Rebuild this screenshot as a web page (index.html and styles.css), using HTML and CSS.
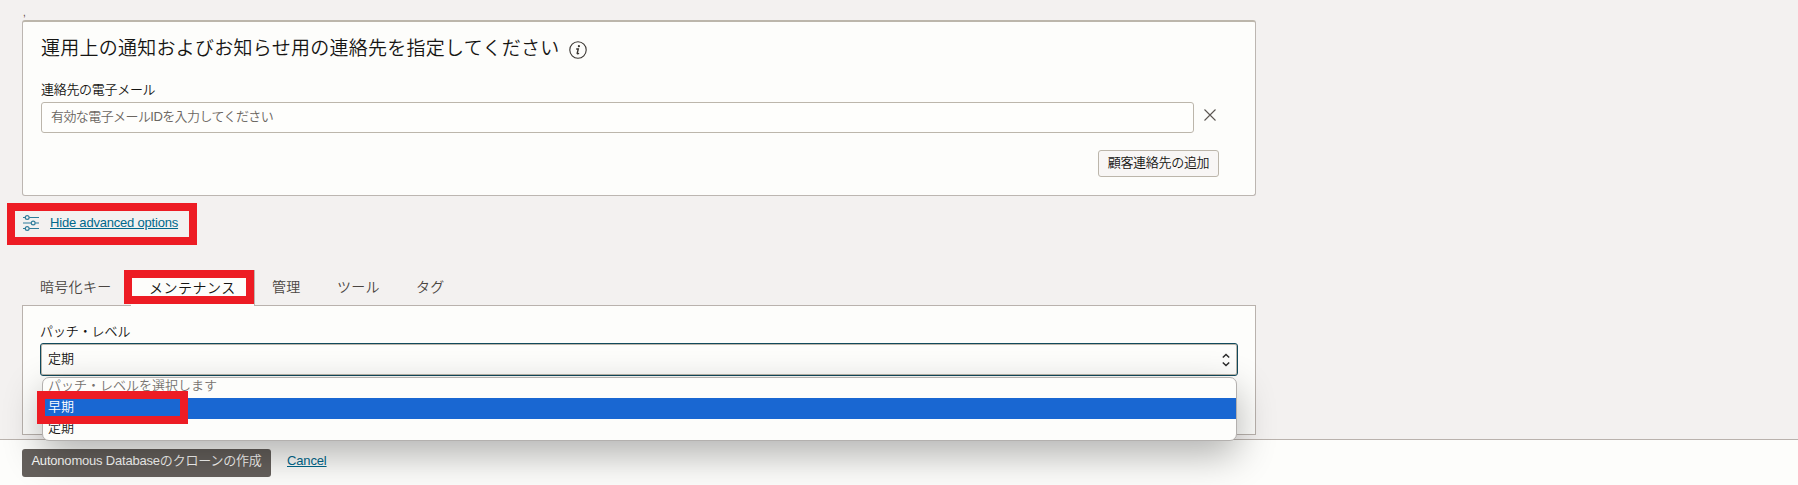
FILE: index.html
```html
<!DOCTYPE html>
<html lang="ja">
<head>
<meta charset="utf-8">
<title>Autonomous Databaseのクローンの作成</title>
<link rel="stylesheet" href="styles.css">
</head>
<body>
<main class="content">
  <div class="lead">,</div>
  <section class="card">
    <h2 class="card-title"><span class="title-text">運用上の通知およびお知らせ用の連絡先を指定してください</span>
      <svg class="info" width="18" height="18" viewBox="0 0 18 18"><circle cx="9" cy="9" r="8.2" fill="none" stroke="#3a3632" stroke-width="1.1"/><circle cx="9.9" cy="5.2" r="1.1" fill="#3a3632"/><path d="M7.200 8h2.100l-1.100 4.200q-.2 1 1.900.1" fill="none" stroke="#3a3632" stroke-width="1.4"/></svg>
    </h2>
    <label class="label contact-label">連絡先の電子メール</label>
    <div class="row">
      <div class="input"><span class="placeholder">有効な電子メールIDを入力してください</span></div>
      <svg class="close" width="12" height="12" viewBox="0 0 12 12"><path d="M.5.5l11 11M11.5.5l-11 11" fill="none" stroke="#5b5652" stroke-width="1.1"/></svg>
    </div>
    <div class="actions"><button class="add">顧客連絡先の追加</button></div>
  </section>

  <div class="advanced">
    <svg class="sliders" width="17" height="17" viewBox="0 0 17 17" fill="none" stroke="#2f7d9b" stroke-width="1.2"><path d="M1 2.500h2.200M7.200 2.500H17M1 8h8.200M13.200 8H17M1 13.500h2.200M7.200 13.500H17"/><circle cx="5.200" cy="2.500" r="1.900"/><circle cx="11.200" cy="8" r="1.900"/><circle cx="5.200" cy="13.500" r="1.900"/></svg>
    <a class="link advanced-link">Hide advanced options</a>
    <span class="mark mark-advanced"></span>
  </div>

  <nav class="tabs">
    <span class="tab tab-key">暗号化キー</span>
    <span class="tab tab-active"><span class="tab-text">メンテナンス</span><span class="mark mark-tab"></span></span>
    <span class="tab tab-admin">管理</span>
    <span class="tab tab-tool">ツール</span>
    <span class="tab tab-tag">タグ</span>
  </nav>
  <section class="panel">
    <label class="label patch-label">パッチ・レベル</label>
    <div class="select">
      <span class="value">定期</span>
      <svg class="arrows" width="8" height="14" viewBox="0 0 8 14"><path d="M.8 4.500L4 1.500l3.200 3M.8 9.500l3.200 3 3.200-3" fill="none" stroke="#2b2b2b" stroke-width="1.500"/></svg>
      <div class="menu">
        <div class="option hint"><span class="hint-text">パッチ・レベルを選択します</span></div>
        <div class="option chosen"><span>早期</span></div>
        <div class="option"><span>定期</span></div>
        <span class="mark mark-option"></span>
      </div>
    </div>
  </section>
</main>
<footer class="footer">
  <button class="create">Autonomous Databaseのクローンの作成</button>
  <a class="link cancel">Cancel</a>
</footer>
</body>
</html>
```
FILE: styles.css
```css
* { box-sizing: border-box; }
body {
  margin: 0; height: 485px; overflow: hidden; display: flex; flex-direction: column;
  background: #f3f1f0; color: #161513;
  font: 350 13px/16px "Liberation Sans", "Noto Sans CJK JP", sans-serif;
}
span, label, a, button { white-space: nowrap; }
.content { height: 439px; width: 1256px; padding-left: 22px; flex: none; position: relative; z-index: 2; }
.lead { height: 20px; padding: 5px 0 0 1px; font-size: 10px; line-height: 16px; color: #57483a; }
.card {
  height: 176px; padding: 15px 18px 0; background: #fdfdfb;
  border: 1px solid #bcb6b1; border-top: 2px solid #bcb6ab; border-radius: 3px;
}
.card-title { display: flex; align-items: center; gap: 9px; margin: 0; height: 24px; font-size: 19px; font-weight: 350; color: #161513; }
.title-text { letter-spacing: .26px; }
.info { margin-top: 2px; }
.label { display: block; letter-spacing: -.3px; }
.contact-label { margin-top: 21px; }
.row { display: flex; gap: 10px; margin-top: 4px; }
.input { width: 1153px; height: 31px; padding: 6px 9px; border: 1px solid #bcb6ab; border-radius: 3px; background: #fefefc; }
.placeholder { color: #6b6661; letter-spacing: -.58px; }
.close { margin-top: 7px; }
.actions { display: flex; justify-content: flex-end; padding: 17px 18px 0 0; }
.add {
  width: 121px; height: 27px; padding: 0 0 2px; font: inherit; letter-spacing: -.3px; color: #161513;
  background: #f8f6f5; border: 1px solid #bcb6ab; border-radius: 3px;
}
.advanced { position: relative; display: flex; gap: 11px; height: 74px; padding-top: 19px; }
.link { color: #00688c; text-decoration: underline; }
.advanced-link { height: 16px; letter-spacing: -.2px; }
.mark { position: absolute; border: 8px solid #ed1c24; z-index: 5; }
.mark-advanced { left: -15px; top: 7px; width: 190px; height: 42px; }
.tabs { display: flex; height: 35px; font-size: 14px; line-height: 20px; color: #4a4541; }
.tab { padding-top: 7px; letter-spacing: .3px; }
.tab-key { width: 109px; padding-left: 18px; }
.tab-active { position: relative; width: 124px; height: 36px; padding: 8px 0 0 18px; background: #fdfdfb; border-right: 1px solid #bcb6b1; color: #161513; letter-spacing: .5px; z-index: 1; }
.mark-tab { left: -7px; top: 0; width: 130px; height: 34px; }
.tab-admin { width: 65px; padding-left: 17px; }
.tab-tool { width: 79px; padding-left: 17px; }
.tab-tag { padding-left: 17px; }
.panel { height: 130px; padding: 18px 17px 0; background: #fdfdfb; border: 1px solid #b9b2ad; }
.patch-label { letter-spacing: -.1px; }
.select {
  position: relative; display: flex; justify-content: space-between; width: 1198px; height: 33px; margin-top: 3px;
  padding: 7px 7px 0 7px; background: #fdfdfb; border: 1px solid #124a5c; border-radius: 3px; box-shadow: inset 0 0 0 1px #bcb6ab;
}
.arrows { margin-top: 2px; }
.menu {
  position: absolute; left: 1px; top: 33px; width: 1195px; height: 64px;
  background: #fdfdfb; border: 1px solid #b3b0ae; border-radius: 7px; box-shadow: 0 14px 38px rgba(0,0,0,.3);
}
.option { height: 21px; padding-left: 5px; line-height: 18px; }
.hint { height: 20px; color: #77736f; line-height: 16px; }
.chosen { background: #1967d2; color: #fff; }
.mark-option { left: -6px; top: 13px; width: 151px; height: 33px; }
.footer {
  flex: none; height: 46px; display: flex; padding: 9px 22px; border-top: 1px solid #b9b2ad; background: #fdfdfb;
}
.create { width: 249px; height: 28px; padding: 0 0 4px; font: inherit; letter-spacing: -.2px; color: #fdfdfb; background: #65605c; border: 0; border-radius: 3px; }
.cancel { margin: 4px 0 0 16px; height: 16px; letter-spacing: -.15px; }
```
